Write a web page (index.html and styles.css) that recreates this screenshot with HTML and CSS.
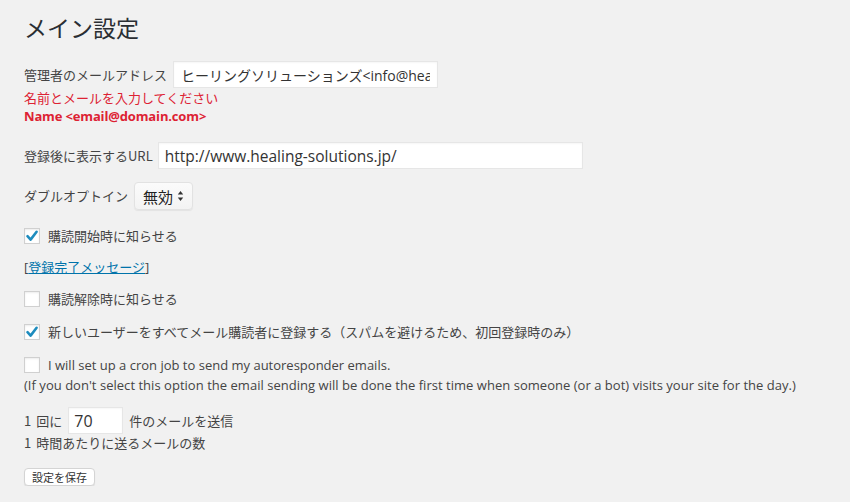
FILE: index.html
```html
<!DOCTYPE html>
<html lang="ja">
<head>
<meta charset="utf-8">
<title>メイン設定</title>
<link rel="stylesheet" href="styles.css">
</head>
<body>
<div class="wrap">
  <h1 class="title">メイン設定</h1>

  <div class="row row-email">
    <span class="label">管理者のメールアドレス</span>
    <input class="field field-email" type="text" value="ヒーリングソリューションズ&lt;info@healing-solutions.jp&gt;">
  </div>
  <div class="error">名前とメールを入力してください</div>
  <div class="error error-bold">Name &lt;email@domain.com&gt;</div>

  <div class="row row-url">
    <span class="label">登録後に表示するURL</span>
    <input class="field field-url" type="text" value="http://www.healing-solutions.jp/">
  </div>

  <div class="row row-optin">
    <span class="label">ダブルオプトイン</span>
    <span class="select">
      <span class="select-text">無効</span>
      <svg class="select-arrows" width="7" height="12" viewBox="0 0 7 12"><path d="M3.5 1 L6.2 4.6 L0.8 4.6 Z" fill="#333"/><path d="M3.5 11 L6.2 7.4 L0.8 7.4 Z" fill="#333"/></svg>
    </span>
  </div>

  <div class="row check-row check-1">
    <span class="checkbox checked"><svg width="14" height="14" viewBox="0 0 14 14"><path d="M2.5 7.2 L5.6 10.6 L11.6 2.8" fill="none" stroke="#1e8cbe" stroke-width="2.6" stroke-linecap="round" stroke-linejoin="round"/></svg></span>
    <span class="check-text">購読開始時に知らせる</span>
  </div>

  <div class="link-row">[<a class="link" href="#">登録完了メッセージ</a>]</div>

  <div class="row check-row check-2">
    <span class="checkbox"></span>
    <span class="check-text">購読解除時に知らせる</span>
  </div>

  <div class="row check-row check-3">
    <span class="checkbox checked"><svg width="14" height="14" viewBox="0 0 14 14"><path d="M2.5 7.2 L5.6 10.6 L11.6 2.8" fill="none" stroke="#1e8cbe" stroke-width="2.6" stroke-linecap="round" stroke-linejoin="round"/></svg></span>
    <span class="check-text">新しいユーザーをすべてメール購読者に登録する（スパムを避けるため、初回登録時のみ）</span>
  </div>

  <div class="row check-row check-4">
    <span class="checkbox"></span>
    <span class="check-text">I will set up a cron job to send my autoresponder emails.</span>
  </div>
  <div class="note">(If you don't select this option the email sending will be done the first time when someone (or a bot) visits your site for the day.)</div>

  <div class="row row-count">
    <span class="label"><span class="digit">1</span>回に</span>
    <input class="field field-count" type="text" value="70">
    <span class="label">件のメールを送信</span>
  </div>
  <div class="hint"><span class="digit">1</span>時間あたりに送るメールの数</div>

  <button class="save" type="button">設定を保存</button>
</div>
</body>
</html>
```

FILE: styles.css
```css
html, body {
  margin: 0;
  padding: 0;
  background: #f1f1f1;
}

body {
  font-family: "Open Sans", "Noto Sans CJK JP", sans-serif;
  font-size: 13px;
  color: #444;
}

.wrap {
  padding: 12px 0 0 24px;
}

.title {
  margin: 0;
  font-family: "Noto Sans CJK JP", sans-serif;
  font-size: 23px;
  font-weight: 400;
  line-height: 30px;
  color: #2a2e33;
}

.row {
  display: flex;
  align-items: center;
}

.label {
  font-family: "Noto Sans CJK JP", "Open Sans", sans-serif;
  font-size: 13px;
  line-height: 20px;
  white-space: nowrap;
}

.digit {
  margin-right: 5px;
}

.field {
  box-sizing: border-box;
  height: 27px;
  border: 1px solid #e6e6e6;
  background: #fff;
  box-shadow: inset 0 1px 2px rgba(0,0,0,0.04);
  font-family: "Open Sans", "Noto Sans CJK JP", sans-serif;
  font-size: 15px;
  color: #333;
  padding: 0 7px;
  margin: 0;
  outline: none;
}

.row-email {
  margin-top: 19px;
}

.field-email {
  width: 265px;
  margin-left: 6px;
  font-size: 14px;
}

.error {
  color: #dd2233;
  line-height: 19px;
  font-family: "Noto Sans CJK JP", sans-serif;
}

.error:first-of-type {
  margin-top: 1px;
}

.error-bold {
  font-family: "Open Sans", sans-serif;
  font-weight: 700;
  letter-spacing: -0.15px;
}

.row-url {
  margin-top: 16px;
}

.field-url {
  width: 425px;
  margin-left: 5px;
  padding-left: 6px;
  font-size: 15.5px;
}

.row-optin {
  margin-top: 13px;
}

.select {
  box-sizing: border-box;
  display: inline-flex;
  align-items: center;
  justify-content: space-between;
  width: 59px;
  height: 28px;
  margin-left: 6px;
  padding: 0 8px 0 8px;
  background: linear-gradient(#fbfbfb, #f3f3f3);
  border: 1px solid #e2e2e2;
  border-radius: 4px;
  box-shadow: 0 1px 1px rgba(0,0,0,0.06);
  font-family: "Noto Sans CJK JP", sans-serif;
  font-size: 15px;
  color: #222;
}

.select-arrows {
  display: block;
}

.check-row {
  height: 20px;
}

.checkbox {
  box-sizing: border-box;
  width: 16px;
  height: 16px;
  flex: none;
  display: flex;
  align-items: center;
  justify-content: center;
  background: #fff;
  border: 1px solid #d0d0d0;
  box-shadow: inset 0 1px 2px rgba(0,0,0,0.08);
}

.check-text {
  margin-left: 8px;
  line-height: 20px;
  white-space: nowrap;
}

.check-1 {
  margin-top: 16px;
}

.link-row {
  margin-top: 11px;
  line-height: 20px;
}

.link {
  color: #0073aa;
  text-decoration: underline;
}

.check-2 {
  margin-top: 12px;
}

.check-3 {
  margin-top: 13px;
}

.check-4 {
  margin-top: 13px;
}

.note {
  line-height: 20px;
  white-space: nowrap;
  letter-spacing: 0.03px;
}

.row-count {
  margin-top: 12px;
}

.field-count {
  width: 55px;
  margin: 0 6px 0 6px;
  padding-left: 5px;
  font-size: 16px;
}

.hint {
  line-height: 18px;
  font-family: "Noto Sans CJK JP", sans-serif;
}

.save {
  display: block;
  margin-top: 16px;
  box-sizing: border-box;
  width: 71px;
  height: 18px;
  padding: 0;
  background: #fff;
  border: 1px solid #d4d4d4;
  border-radius: 4px;
  box-shadow: 0 1px 1px rgba(0,0,0,0.08);
  font-family: "Noto Sans CJK JP", sans-serif;
  font-size: 11px;
  line-height: 16px;
  color: #333;
}
```
